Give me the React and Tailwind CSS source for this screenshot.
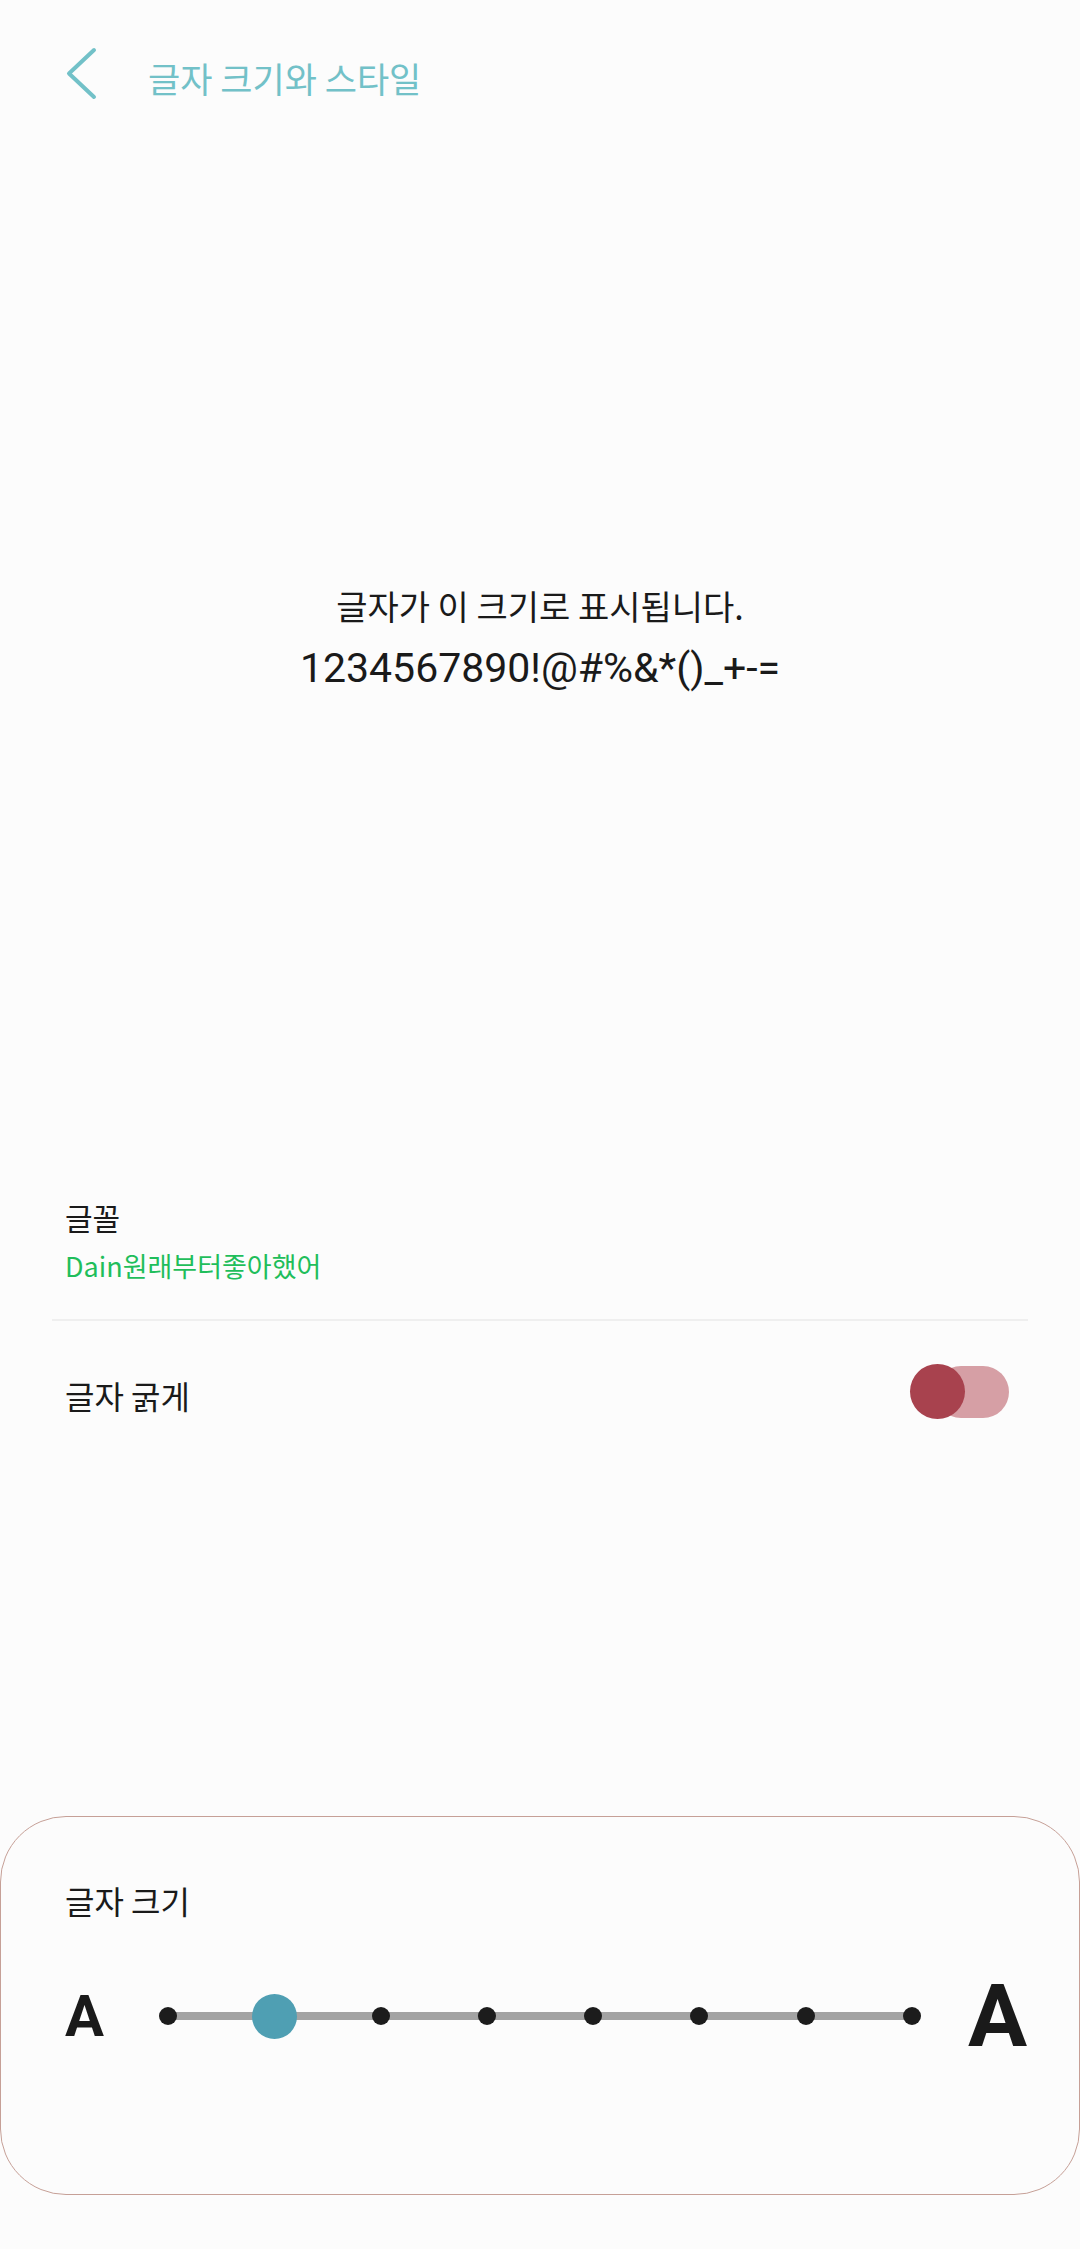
import React, { useState } from 'react';

const SIZE_STEPS = 8;

export default function App() {
  const [bold, setBold] = useState(true);
  const [size, setSize] = useState(1);

  return (
    <div className="min-h-[2249px] w-full bg-[#fcfcfc] flex flex-col font-['Noto_Sans_CJK_KR',sans-serif] text-[#1a1a1a]">
      {/* Header */}
      <header className="h-[154px] shrink-0 flex items-center pl-[65px]">
        <svg width="34" height="56" viewBox="0 0 34 56" className="mb-[6px]" fill="none">
          <path d="M29 4 L4 27.5 L29 51" stroke="#72c1c8" strokeWidth="4" strokeLinecap="round" strokeLinejoin="round" />
        </svg>
        <h1 className="ml-[49px] text-[35px] leading-none text-[#72c1c8]">글자 크기와 스타일</h1>
      </header>

      {/* Preview */}
      <section className="h-[966px] shrink-0 flex flex-col items-center justify-center">
        <p className="text-[34px] leading-[60px] mb-[2px]">글자가 이 크기로 표시됩니다.</p>
        <p className="font-['Roboto',sans-serif] text-[41px] leading-[60px]">1234567890!@#%&*()_+-=</p>
      </section>

      {/* Font */}
      <div className="shrink-0 px-[65px] pt-[77px] pb-[36px]">
        <p className="text-[30px] leading-[40px]">글꼴</p>
        <p className="mt-[12px] text-[27px] leading-[34px] text-[#1fbe5b]">Dain원래부터좋아했어</p>
      </div>
      <div className="shrink-0 mx-[52px] h-[2px] bg-[#efefef]" />

      {/* Bold toggle */}
      <div className="shrink-0 h-[148px] flex items-center justify-between pl-[65px] pr-[71px]">
        <p className="text-[32px] leading-[40px]">글자 굵게</p>
        <button
          onClick={() => setBold(!bold)}
          className="relative mb-[6px] w-[99px] h-[56px] flex items-center justify-end"
        >
          <div className={`w-[74px] h-[52px] rounded-full ${bold ? 'bg-[#d69fa5]' : 'bg-[#c8c8c8]'}`} />
          <div className={`absolute top-0 w-[55px] h-[55px] rounded-full ${bold ? 'left-0 bg-[#a8424e]' : 'left-[44px] bg-[#8a8a8a]'}`} />
        </button>
      </div>

      {/* Size card */}
      <div className="mt-auto mb-[54px] h-[379px] shrink-0 border border-[#c6a097] rounded-[66px] bg-[#fcfcfc] pt-[63px]">
        <p className="pl-[64px] text-[32px] leading-[40px]">글자 크기</p>
        <div className="mt-[51px] h-[90px] flex items-center pl-[64px] font-['Roboto',sans-serif] font-bold text-[#1a1a1a]">
          <span className="w-[50px] text-[58px] leading-none">A</span>
          <div className="relative w-[850px] h-[90px] grid grid-cols-8 items-center">
            <div className="absolute left-[53px] right-[53px] top-1/2 -translate-y-1/2 h-[8px] bg-[#a3a3a3]" />
            {Array.from({ length: SIZE_STEPS }).map((_, i) => (
              <div key={i} className="relative z-10 flex justify-center items-center" onClick={() => setSize(i)}>
                {i === size ? (
                  <div className="w-[45px] h-[45px] rounded-full bg-[#4f9fb3]" />
                ) : (
                  <div className="w-[18px] h-[18px] rounded-full bg-[#1c1c1c]" />
                )}
              </div>
            ))}
          </div>
          <span className="ml-[3px] text-[88px] leading-none">A</span>
        </div>
      </div>
    </div>
  );
}
